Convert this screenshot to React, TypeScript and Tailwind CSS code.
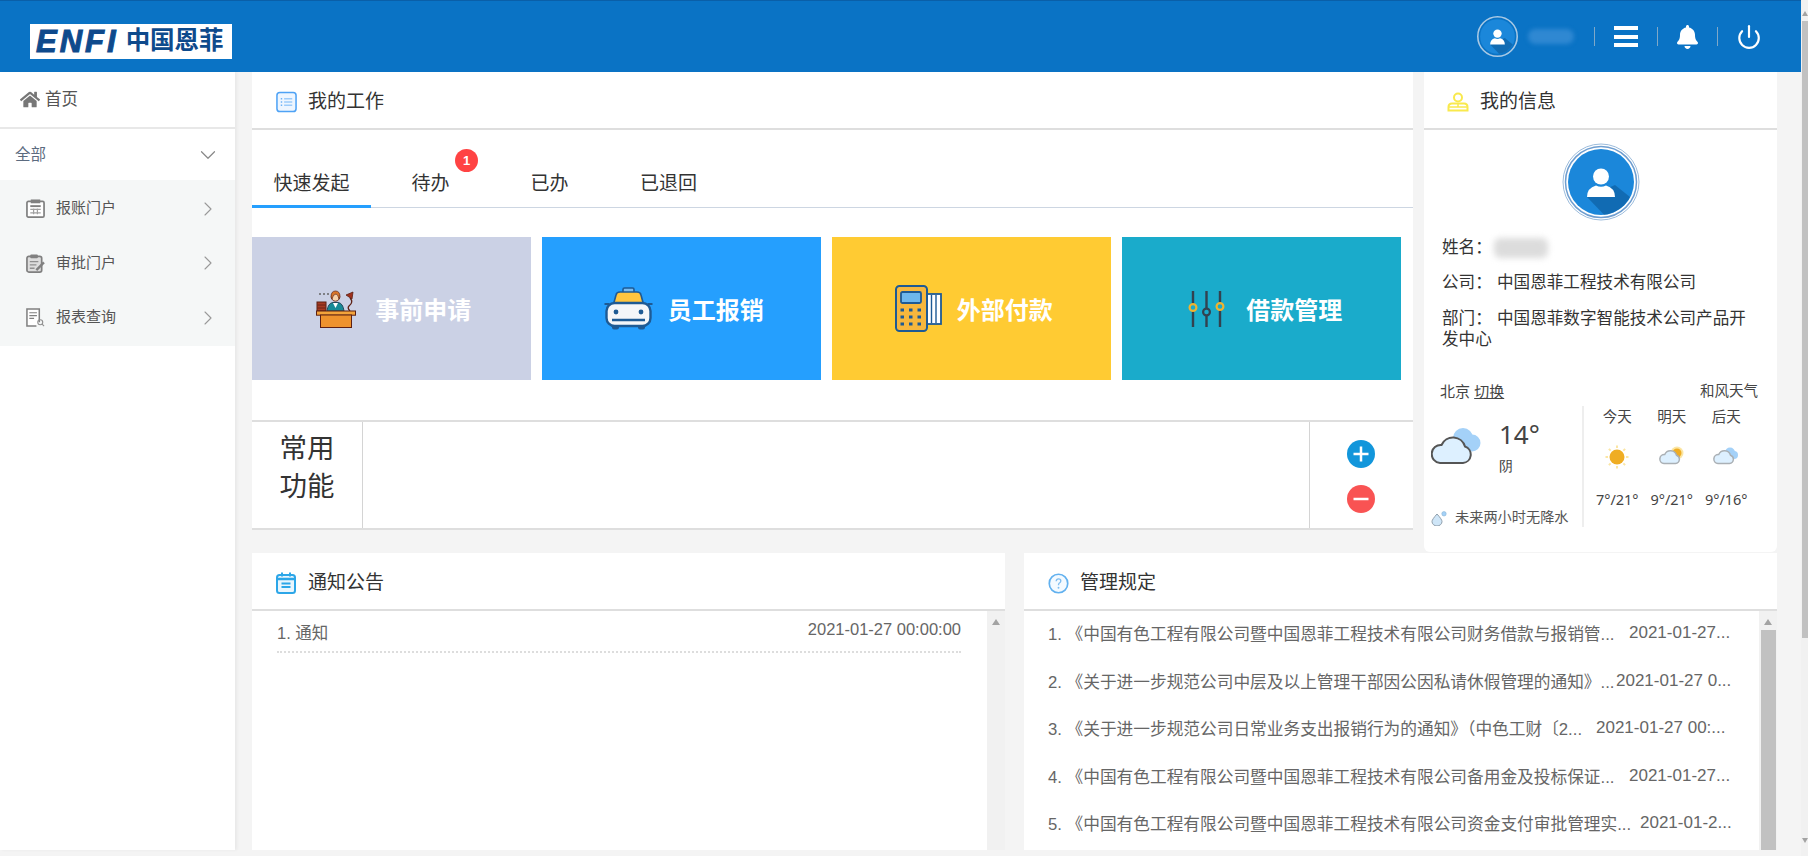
import { ChevronDown, ChevronRight, Power } from "lucide-react";
import { FaBell, FaHome } from "react-icons/fa";

function Avatar({ size, ring }: { size: string; ring: "single" | "double" }) {
  return (
    <svg viewBox="0 0 78 78" className={size}>
      {ring === "double" ? (
        <>
          <circle cx="39" cy="39" r="38" fill="none" stroke="#9cbcdc" strokeWidth="1" />
          <circle cx="39" cy="39" r="35.5" fill="none" stroke="#6f9ed0" strokeWidth="1.5" />
          <circle cx="39" cy="39" r="33" fill="#1b87da" />
        </>
      ) : (
        <>
          <circle cx="39" cy="39" r="37.5" fill="none" stroke="#a9c9e4" strokeWidth="3" />
          <circle cx="39" cy="39" r="33" fill="#1b87da" />
        </>
      )}
      <path d="M25 54 L42 71.8 Q60 69 68 54 L53 42 Z" fill="#0d5c9e" opacity="0.65" />
      <circle cx="39" cy="33.5" r="8" fill="#fff" />
      <path d="M25 54 Q25 45 34 42.5 Q39 45 44 42.5 Q53 45 53 54 Z" fill="#fff" />
    </svg>
  );
}

function ListIcon() {
  return (
    <svg viewBox="0 0 22 22" className="h-[22px] w-[21px]">
      <rect x="1" y="1" width="20" height="20" rx="3" fill="#eef6ff" stroke="#4ea2f5" strokeWidth="1.6" />
      <path d="M5 7.5h1.5M5 11h1.5M5 14.5h1.5" stroke="#6cb2f7" strokeWidth="1.6" />
      <path d="M8.5 7.5H17M8.5 11H17M8.5 14.5H17" stroke="#9ccbfa" strokeWidth="1.6" />
    </svg>
  );
}

function UserIcon() {
  return (
    <svg viewBox="0 0 22 20" className="h-[20px] w-[22px]">
      <circle cx="11" cy="5.5" r="4" fill="none" stroke="#f9e94d" strokeWidth="2" />
      <path d="M1.5 18.5 V15 Q1.5 11.5 5 11.5 H17 Q20.5 11.5 20.5 15 V18.5 Z" fill="none" stroke="#f9e94d" strokeWidth="2" />
      <path d="M1 15h20M11 12v3" stroke="#f9e94d" strokeWidth="1.5" />
    </svg>
  );
}

function CalendarIcon() {
  return (
    <svg viewBox="0 0 20 22" className="h-[22px] w-[20px]">
      <rect x="1" y="3" width="18" height="18" rx="2.5" fill="#eaf6fd" stroke="#2ca6e8" strokeWidth="2" />
      <path d="M1 7h18" stroke="#2ca6e8" strokeWidth="2.5" />
      <path d="M6 0.5v4M14 0.5v4" stroke="#2ca6e8" strokeWidth="2" />
      <path d="M5.5 11.5h9M5.5 15h9" stroke="#2ca6e8" strokeWidth="1.8" />
    </svg>
  );
}

function HelpIcon() {
  return (
    <svg viewBox="0 0 20 20" className="h-[21px] w-[21px]">
      <circle cx="10" cy="10" r="8.8" fill="#f4faff" stroke="#62b1ef" strokeWidth="1.6" />
      <path d="M7.8 7.8 Q8 5.6 10 5.6 Q12.2 5.6 12.2 7.6 Q12.2 8.8 10.6 9.8 Q10 10.2 10 11.6" fill="none" stroke="#7fbdf0" strokeWidth="1.3" />
      <circle cx="10" cy="14" r="0.9" fill="#7fbdf0" />
    </svg>
  );
}

function ReceiptIcon() {
  return (
    <svg viewBox="0 0 20 20" className="h-[19px] w-[19px]">
      <rect x="1" y="2.5" width="18" height="16.5" rx="1.5" fill="#fff" stroke="#808080" strokeWidth="1.8" />
      <rect x="5" y="0.5" width="10" height="4" fill="#808080" />
      <path d="M4.5 7.5h11" stroke="#808080" strokeWidth="2" />
      <path d="M4.5 11h11M4.5 14.5h11M8 10v6M12 10v6" stroke="#a0a0a0" strokeWidth="1.3" />
    </svg>
  );
}

function ApproveIcon() {
  return (
    <svg viewBox="0 0 20 20" className="h-[19px] w-[19px]">
      <rect x="1" y="2.5" width="15.5" height="16.5" rx="2" fill="#ddd" stroke="#808080" strokeWidth="1.8" />
      <rect x="4.5" y="0.5" width="8" height="4" rx="1" fill="#808080" />
      <path d="M4 8h9M4 11.5h7M4 15h5" stroke="#909090" strokeWidth="1.4" />
      <path d="M10 16 L18 8 L19.8 9.8 L11.8 17.8 Z" fill="#808080" />
    </svg>
  );
}

function ReportIcon() {
  return (
    <svg viewBox="0 0 20 20" className="h-[19px] w-[19px]">
      <path d="M14 15V1H1v18h10" fill="#fff" stroke="#808080" strokeWidth="1.6" />
      <path d="M3.5 5h8M3.5 8h8M3.5 11h5" stroke="#808080" strokeWidth="1.3" />
      <circle cx="15" cy="15" r="2.6" fill="none" stroke="#909090" strokeWidth="1.2" />
      <path d="M17 17l2 2" stroke="#909090" strokeWidth="1.2" />
    </svg>
  );
}

function DeskIcon() {
  return (
    <svg viewBox="0 0 40 38" className="h-[38px] w-[40px]">
      <path d="M3 4h2M7 4h2M11 4h2" stroke="#666" strokeWidth="1.4" />
      <rect x="1" y="12" width="9" height="9" fill="#a63a22" stroke="#5d2013" strokeWidth="1" />
      <path d="M1.5 15h8M1.5 18h8" stroke="#5d2013" strokeWidth="0.8" />
      <path d="M11 21 Q12 13 17 12.5 H22 Q27 13 28 21 Z" fill="#188a96" stroke="#24485c" strokeWidth="1" />
      <path d="M17 13l2.5 5 2.5-5z" fill="#fff" />
      <circle cx="19.5" cy="7" r="4.2" fill="#f7d2ac" stroke="#5d2013" strokeWidth="0.9" />
      <path d="M15 7 Q15 1 19.5 1 Q24 1 24 7 L23 9 Q22 4 20 4 Q17 4 16 9 Z" fill="#d9762a" stroke="#5d2013" strokeWidth="0.7" />
      <path d="M30 5l7-3 -1 7z" fill="#a0301d" stroke="#5d2013" strokeWidth="0.8" />
      <path d="M34 8 Q38 12 33 16 Q31 18 34 21" fill="none" stroke="#5d2013" strokeWidth="1.3" />
      <rect x="0.5" y="21" width="39" height="4.2" fill="#f3a33a" stroke="#5d2013" strokeWidth="1" />
      <rect x="4.5" y="25" width="31" height="12.5" fill="#ee922d" stroke="#5d2013" strokeWidth="1" />
    </svg>
  );
}

function CarIcon() {
  return (
    <svg viewBox="0 0 49 43" className="h-[43px] w-[49px]">
      <rect x="19" y="1" width="11" height="6" rx="1.5" fill="#7bbcef" stroke="#1e5a94" strokeWidth="1.6" />
      <path d="M9 19 L12 8 Q12.5 5 16 5 H33 Q36.5 5 37 8 L40 19 Z" fill="#ffc53f" stroke="#1e5a94" strokeWidth="1.6" />
      <path d="M0.5 17h5M43.5 17h5" stroke="#1e5a94" strokeWidth="2.2" />
      <rect x="8" y="37" width="7" height="5.5" rx="2" fill="#1e5a94" />
      <rect x="34" y="37" width="7" height="5.5" rx="2" fill="#1e5a94" />
      <rect x="2.5" y="16" width="44" height="23" rx="8" fill="#f4f6f9" stroke="#1e5a94" strokeWidth="2.4" />
      <circle cx="12" cy="25" r="2.4" fill="#1e5a94" />
      <circle cx="37" cy="25" r="2.4" fill="#1e5a94" />
      <path d="M8 33h33" stroke="#1e5a94" strokeWidth="2.6" />
    </svg>
  );
}

function TerminalIcon() {
  return (
    <svg viewBox="0 0 47 47" className="h-[47px] w-[47px]">
      <rect x="32" y="9" width="14" height="30" fill="#fff" stroke="#1e5a94" strokeWidth="1.8" />
      <path d="M36.500 10v28M41 10v28" stroke="#1e5a94" strokeWidth="1.4" />
      <rect x="1" y="1" width="31" height="45" rx="3.500" fill="#f7b73d" stroke="#1e5a94" strokeWidth="2" />
      <rect x="6" y="7" width="20" height="11" rx="1.500" fill="#6eb7ec" stroke="#1e5a94" strokeWidth="1.8" />
      <path d="M5.500 25h3.500M14 25h3.500M22.500 25h3.500M5.500 32h3.500M14 32h3.500M22.500 32h3.500M5.500 39h3.500M14 39h3.500M22.500 39h3.500" stroke="#1e5a94" strokeWidth="3" />
    </svg>
  );
}

function SlidersIcon() {
  return (
    <svg viewBox="0 0 37 36" className="ml-[3px] h-[36px] w-[37px]">
      <path d="M5 0v36M18.500 0v36M32 0v36" stroke="#33414f" strokeWidth="2.400" />
      <circle cx="5" cy="16.500" r="3.400" fill="#1aabcb" stroke="#f0b32f" strokeWidth="2.200" />
      <circle cx="18.500" cy="21" r="3.400" fill="#1aabcb" stroke="#33414f" strokeWidth="2.200" />
      <circle cx="32" cy="15.500" r="3.400" fill="#1aabcb" stroke="#f0b32f" strokeWidth="2.200" />
    </svg>
  );
}

const cloudPath = "M10 35 H33 A8.500 8.500 0 0 0 35 18.500 A12.500 12.500 0 0 0 11.500 17 A9 9 0 0 0 10 35 Z";

function BigCloud() {
  return (
    <svg viewBox="0 0 50 36" className="h-[36px] w-[50px]">
      <circle cx="32" cy="10" r="10" fill="#a4d1f8" />
      <circle cx="41" cy="15" r="8.500" fill="#a4d1f8" />
      <path d={cloudPath} transform="translate(-1 0)" fill="#ddf0ff" stroke="#555" strokeWidth="2" />
    </svg>
  );
}

function Sun() {
  const rays = [0, 45, 90, 135, 180, 225, 270, 315];
  return (
    <svg viewBox="0 0 24 24" className="h-[24px] w-[24px]">
      {rays.map((r) => (
        <rect key={r} x="11" y="0.5" width="2" height="2.500" fill="#fbe6a4" transform={`rotate(${r} 12 12)`} />
      ))}
      <circle cx="12" cy="12" r="7.500" fill="#efad24" />
    </svg>
  );
}

function SunCloud() {
  return (
    <svg viewBox="0 0 26 22" className="h-[22px] w-[26px]">
      <circle cx="18" cy="7" r="6.500" fill="#fbe6a4" />
      <circle cx="18" cy="7" r="4.500" fill="#efad24" />
      <path d={cloudPath} transform="translate(0 0) scale(0.5)" fill="#ddf0ff" stroke="#aab0b5" strokeWidth="3" />
    </svg>
  );
}

function DoubleCloud() {
  return (
    <svg viewBox="0 0 26 22" className="h-[22px] w-[26px]">
      <circle cx="17" cy="6.500" r="5" fill="#a4d1f8" />
      <circle cx="21" cy="9" r="4" fill="#a4d1f8" />
      <path d={cloudPath} transform="scale(0.5)" fill="#ddf0ff" stroke="#aab0b5" strokeWidth="3" />
    </svg>
  );
}

function Drops() {
  return (
    <svg viewBox="0 0 16 15" className="h-[15px] w-[16px]">
      <path d="M6 3 Q1 8.500 1 10.500 A5 4.500 0 0 0 11 10.500 Q11 8.500 6 3 Z" fill="#cfe6f8" stroke="#8f9eab" strokeWidth="1" />
      <circle cx="13" cy="2.800" r="2.200" fill="#a4d1f8" stroke="#8ab4d4" strokeWidth="0.6" />
    </svg>
  );
}

function PanelHeader({ icon, title }: { icon: React.ReactNode; title: string }) {
  return (
    <div className="flex h-[58px] shrink-0 items-center border-b-2 border-[#dedede] bg-white pt-[4px]">
      <div className="flex w-[56px] shrink-0 justify-center pl-[12px]">{icon}</div>
      <span className="text-[19px] text-[#333]">{title}</span>
    </div>
  );
}

function Sidebar() {
  const items = [
    { icon: <ReceiptIcon />, label: "报账门户" },
    { icon: <ApproveIcon />, label: "审批门户" },
    { icon: <ReportIcon />, label: "报表查询" },
  ];
  return (
    <aside className="flex w-[235px] shrink-0 flex-col bg-white shadow-[2px_0_3px_rgba(0,0,0,0.05)]">
      <div className="flex h-[57px] shrink-0 items-center border-b-2 border-[#e8e8e8] pl-[20px] text-[#555]">
        <FaHome className="h-[19px] w-[20px] text-[#777]" />
        <span className="ml-[5px] text-[16.500px]">首页</span>
      </div>
      <div className="flex h-[51px] shrink-0 items-center justify-between pl-[15px] pr-[14px] text-[15.500px] text-[#5c6b80]">
        全部
        <ChevronDown className="h-[26px] w-[26px] text-[#888]" strokeWidth={1.1} />
      </div>
      <div className="flex h-[166px] shrink-0 flex-col justify-center bg-[#f5f7f7]">
        {items.map((it) => (
          <div key={it.label} className="flex h-[54.500px] items-center pl-[26px] pr-[15px]">
            {it.icon}
            <span className="ml-[11px] flex-1 text-[15px] text-[#555]">{it.label}</span>
            <ChevronRight className="h-[24px] w-[24px] text-[#999]" strokeWidth={1.1} />
          </div>
        ))}
      </div>
    </aside>
  );
}

function Header() {
  return (
    <header className="flex h-[72px] shrink-0 items-center justify-between border-t border-[#0a5fa8] bg-[#0a73c5] pl-[30px] pr-[39px]">
      <div className="mt-[9px] flex h-[35px] w-[202px] items-center bg-white pl-[6px]">
        <span className="text-[31px] font-bold italic leading-none tracking-[3px] text-[#0e4a8c] [-webkit-text-stroke:1px_#0e4a8c]">ENFI</span>
        <span className="ml-[7px] text-[24.500px] font-bold leading-none text-[#0e4a8c]">中国恩菲</span>
      </div>
      <div className="flex items-center text-white">
        <Avatar size="h-[41px] w-[41px]" ring="single" />
        <div className="ml-[10px] h-[15px] w-[46px] rounded-full bg-[#2f88d2] blur-[2px]" />
        <div className="ml-[20px] h-[19px] w-px bg-[#7fa8c8]" />
        <div className="mx-[19px] flex h-[21px] w-[24px] flex-col justify-between">
          <span className="h-[4px] bg-white" />
          <span className="h-[4px] bg-white" />
          <span className="h-[4px] bg-white" />
        </div>
        <div className="h-[19px] w-px bg-[#7fa8c8]" />
        <FaBell className="mx-[19px] h-[24px] w-[21px]" />
        <div className="h-[19px] w-px bg-[#7fa8c8]" />
        <Power className="ml-[18px] h-[26px] w-[26px]" strokeWidth={2} />
      </div>
    </header>
  );
}

function WorkPanel() {
  const tabs = ["快速发起", "待办", "已办", "已退回"];
  const tiles = [
    { label: "事前申请", bg: "bg-[#cbd1e5]", icon: <DeskIcon />, gap: "ml-[19px]" },
    { label: "员工报销", bg: "bg-[#259ffe]", icon: <CarIcon />, gap: "ml-[15px]" },
    { label: "外部付款", bg: "bg-[#ffcb33]", icon: <TerminalIcon />, gap: "ml-[15px]" },
    { label: "借款管理", bg: "bg-[#1aabcb]", icon: <SlidersIcon />, gap: "ml-[21px]" },
  ];
  return (
    <section className="flex h-[458px] w-[1161px] shrink-0 flex-col bg-white">
      <PanelHeader icon={<ListIcon />} title="我的工作" />
      <div className="mt-[43px] flex h-[35px] shrink-0 border-b border-[#cdd6e2]">
        {tabs.map((t, i) => (
          <div
            key={t}
            className={
              i === 0
                ? "relative flex h-[35px] w-[119px] items-center justify-center border-b-[3px] border-[#259ffe] pb-[9px] text-[19px] text-[#333]"
                : "relative flex h-[34px] w-[119px] items-center justify-center pb-[12px] text-[19px] text-[#333]"
            }
          >
            {t}
            {i === 1 && (
              <span className="absolute left-[84px] top-[-24px] flex h-[23px] w-[23px] items-center justify-center rounded-full bg-[#ff4343] text-[13px] font-bold text-white">
                1
              </span>
            )}
          </div>
        ))}
      </div>
      <div className="mt-[29px] flex h-[143px] shrink-0 gap-[11.500px]">
        {tiles.map((t) => (
          <div key={t.label} className={`flex w-[278.500px] items-center justify-center pl-[5px] ${t.bg}`}>
            {t.icon}
            <span className={`${t.gap} mt-[5px] text-[24px] font-bold text-white`}>{t.label}</span>
          </div>
        ))}
      </div>
      <div className="mt-[40px] flex h-[110px] shrink-0 border-y-2 border-[#dedede]">
        <div className="flex w-[111px] items-center justify-center border-r border-[#d4d4d4] pb-[14px] text-center text-[27.500px] leading-[38px] text-[#333]">
          常用
          <br />
          功能
        </div>
        <div className="flex-1" />
        <div className="flex w-[104px] flex-col items-center justify-center gap-[17px] border-l border-[#d4d4d4] pr-[2px] pt-[2px]">
          <span className="flex h-[28px] w-[28px] items-center justify-center rounded-full bg-[#1296db]">
            <svg viewBox="0 0 28 28" className="h-[28px] w-[28px]">
              <path d="M14 6.500v15M6.500 14h15" stroke="#fff" strokeWidth="2.500" />
            </svg>
          </span>
          <span className="flex h-[28px] w-[28px] items-center justify-center rounded-full bg-[#f95353]">
            <svg viewBox="0 0 28 28" className="h-[28px] w-[28px]">
              <path d="M6.500 14h15" stroke="#fff" strokeWidth="2.500" />
            </svg>
          </span>
        </div>
      </div>
    </section>
  );
}

function InfoPanel() {
  const days = [
    { day: "今天", temp: "7°/21°", icon: <Sun /> },
    { day: "明天", temp: "9°/21°", icon: <SunCloud /> },
    { day: "后天", temp: "9°/16°", icon: <DoubleCloud /> },
  ];
  return (
    <section className="flex h-[480px] w-[353px] shrink-0 flex-col rounded-b-[6px] bg-white">
      <PanelHeader icon={<UserIcon />} title="我的信息" />
      <div className="mt-[13px] flex justify-center">
        <Avatar size="h-[78px] w-[78px]" ring="double" />
      </div>
      <div className="pl-[18px] pr-[22px] text-[16.600px] leading-[23px] text-[#333]">
        <div className="mt-[15px] flex items-center">
          <span className="w-[52px]">姓名：</span>
          <div className="h-[20px] w-[54px] rounded-[6px] bg-[#dcdcdc] blur-[3px]" />
        </div>
        <div className="mt-[12px]">
          <span className="inline-block w-[55px]">公司：</span>中国恩菲工程技术有限公司
        </div>
        <div className="mt-[14px] leading-[21px]">
          <span className="inline-block w-[55px]">部门：</span>中国恩菲数字智能技术公司产品开
          <br />
          发中心
        </div>
      </div>
      <div className="mt-[32px] flex h-[20px] items-center justify-between pl-[16px] pr-[19px] text-[#444]">
        <span className="text-[15px]">
          北京 <span className="underline">切换</span>
        </span>
        <span className="text-[14.500px]">和风天气</span>
      </div>
      <div className="mt-[4px] flex h-[121px]">
        <div className="flex w-[160px] shrink-0 flex-col border-r-2 border-[#eee] pl-[7px] pt-[10px]">
          <div className="flex">
            <div className="mt-[12px]">
              <BigCloud />
            </div>
            <div className="ml-[18px] flex flex-col [font-family:'Noto_Sans',sans-serif] text-[#444]">
              <span className="text-[26px] leading-[36px]">14°</span>
              <span className="mt-[4px] text-[14px] leading-[20px]">阴</span>
            </div>
          </div>
          <div className="mt-auto flex h-[18px] items-center text-[14.200px] text-[#555]">
            <Drops />
            <span className="ml-[8px] whitespace-nowrap">未来两小时无降水</span>
          </div>
        </div>
        <div className="flex pl-[6px] pt-[1px] text-[#444]">
          {days.map((d) => (
            <div key={d.day} className="flex w-[54.500px] flex-col items-center">
              <span className="text-[14.500px] leading-[20px]">{d.day}</span>
              <div className="mt-[16px] flex h-[28px] items-center">{d.icon}</div>
              <span className="mt-[18px] text-[14.500px] leading-[20px] [font-family:'Noto_Sans',sans-serif]">{d.temp}</span>
            </div>
          ))}
        </div>
      </div>
    </section>
  );
}

function ListScrollbar({ thumb }: { thumb: boolean }) {
  return (
    <div className="flex w-[18px] shrink-0 flex-col items-center bg-[#f1f1f1]">
      <div className="mt-[8px] h-0 w-0 border-x-[4px] border-b-[6px] border-x-transparent border-b-[#a3a3a3]" />
      {thumb && <div className="mt-[5px] w-[15px] flex-1 bg-[#c1c1c1]" />}
    </div>
  );
}

function NoticePanel() {
  return (
    <section className="flex w-[753px] shrink-0 flex-col bg-white">
      <PanelHeader icon={<CalendarIcon />} title="通知公告" />
      <div className="flex min-h-0 flex-1">
        <div className="flex-1 pl-[25px] pr-[26px]">
          <div className="flex h-[42px] items-center justify-between border-b-2 border-dotted border-[#ddd] text-[16.500px] text-[#666]">
            <span className="mt-[4px]">1. 通知</span>
            <span className="-mt-[4px]">2021-01-27 00:00:00</span>
          </div>
        </div>
        <ListScrollbar thumb={false} />
      </div>
    </section>
  );
}

function RulesPanel() {
  const rows = [
    {
      title: "1. 《中国有色工程有限公司暨中国恩菲工程技术有限公司财务借款与报销管...",
      date: "2021-01-27...",
      width: "w-[581px]",
    },
    {
      title: "2. 《关于进一步规范公司中层及以上管理干部因公因私请休假管理的通知》...",
      date: "2021-01-27 0...",
      width: "w-[568px]",
    },
    {
      title: "3. 《关于进一步规范公司日常业务支出报销行为的通知》（中色工财〔2...",
      date: "2021-01-27 00:...",
      width: "w-[548px]",
    },
    {
      title: "4. 《中国有色工程有限公司暨中国恩菲工程技术有限公司备用金及投标保证...",
      date: "2021-01-27...",
      width: "w-[581px]",
    },
    {
      title: "5. 《中国有色工程有限公司暨中国恩菲工程技术有限公司资金支付审批管理实...",
      date: "2021-01-2...",
      width: "w-[592px]",
    },
  ];
  return (
    <section className="flex w-[753px] shrink-0 flex-col bg-white">
      <PanelHeader icon={<HelpIcon />} title="管理规定" />
      <div className="flex min-h-0 flex-1">
        <div className="flex-1 overflow-hidden pl-[24px]">
          {rows.map((r) => (
            <div key={r.title} className="flex h-[47.500px] items-center whitespace-nowrap text-[16.700px] text-[#666]">
              <span className={`${r.width} shrink-0`}>{r.title}</span>
              <span className="-mt-[4px] text-[17px]">{r.date}</span>
            </div>
          ))}
        </div>
        <ListScrollbar thumb />
      </div>
    </section>
  );
}

export default function App() {
  return (
    <div className="flex h-[856px] w-[1808px] overflow-hidden bg-[#f4f4f4] [font-family:'Liberation_Sans','Noto_Sans_CJK_SC',sans-serif]">
      <div className="flex w-[1801px] shrink-0 flex-col">
        <Header />
        <div className="flex h-[778px]">
          <Sidebar />
          <main className="flex flex-col pl-[17px]">
            <div className="flex h-[481px] shrink-0 items-start gap-[11px]">
              <WorkPanel />
              <InfoPanel />
            </div>
            <div className="flex h-[297px] shrink-0 gap-[19px]">
              <NoticePanel />
              <RulesPanel />
            </div>
          </main>
        </div>
      </div>
      <div className="flex w-[7px] shrink-0 flex-col bg-[#f1f1f1] pl-[1px]">
        <div className="mt-[11px] h-0 w-0 border-x-[3px] border-b-[5px] border-x-transparent border-b-[#a3a3a3]" />
        <div className="mt-[5px] h-[617px] w-full bg-[#c1c1c1]" />
        <div className="mt-[200px] h-0 w-0 border-x-[3px] border-t-[5px] border-x-transparent border-t-[#a3a3a3]" />
      </div>
    </div>
  );
}
